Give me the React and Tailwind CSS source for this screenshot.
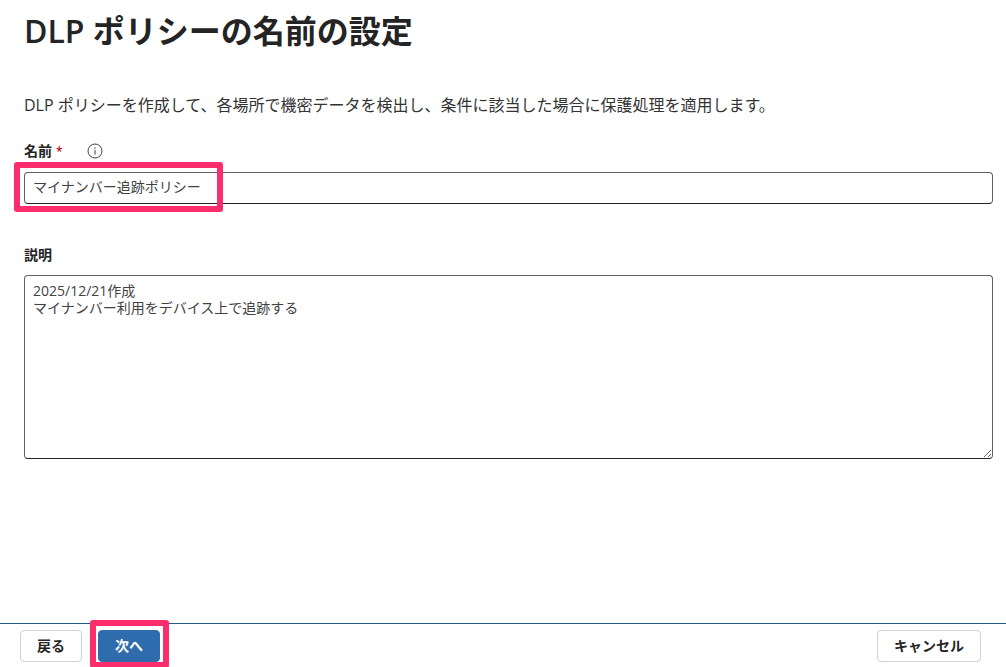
import { useState } from 'react';

function InfoIcon() {
  return (
    <svg viewBox="0 0 16 16" className="h-4 w-4" fill="none" stroke="#424242" aria-hidden="true">
      <circle cx="8" cy="8" r="7" strokeWidth="1" />
      <path d="M8 7.2v4" strokeWidth="1" strokeLinecap="round" />
      <circle cx="8" cy="5" r="0.7" fill="#424242" stroke="none" />
    </svg>
  );
}

const buttonBase = 'h-8 rounded border px-4 text-sm leading-5 font-semibold';

export default function App() {
  const [name, setName] = useState('マイナンバー追跡ポリシー');
  const [description, setDescription] = useState('2025/12/21作成\nマイナンバー利用をデバイス上で追跡する');

  return (
    <div className="flex min-h-screen flex-col overflow-hidden bg-white font-['Open_Sans','Noto_Sans_CJK_JP',sans-serif] text-[#242424]">
      <main className="flex-1 pt-[11px] pr-[13px] pl-6">
        <h1 className="text-[32px] leading-10 font-semibold">DLP ポリシーの名前の設定</h1>
        <p className="mt-[42px] text-base leading-6 text-[#333333]">
          DLP ポリシーを作成して、各場所で機密データを検出し、条件に該当した場合に保護処理を適用します。
        </p>

        {/* Name */}
        <div className="mt-6 flex h-5 items-center">
          <label htmlFor="policy-name" className="text-sm leading-5 font-semibold">
            名前<span className="ml-1 text-xs text-[#b10e1c]">*</span>
          </label>
          <button type="button" aria-label="情報" className="ml-6">
            <InfoIcon />
          </button>
        </div>
        <div className="relative mt-[11px]">
          <input
            id="policy-name"
            type="text"
            required
            value={name}
            onChange={e => setName(e.target.value)}
            className="block h-8 w-full rounded border border-[#616161] border-b-[#242424] px-2 pb-1 text-sm text-[#424242] outline-none"
          />
          <div className="pointer-events-none absolute -top-2.5 -left-2.5 h-[50px] w-[209px] rounded-[3px] border-[6px] border-[#fb2d6c]" />
        </div>

        {/* Description */}
        <label htmlFor="policy-description" className="mt-[39px] block text-sm leading-6 font-semibold">
          説明
        </label>
        <textarea
          id="policy-description"
          value={description}
          onChange={e => setDescription(e.target.value)}
          className="mt-2 block h-46 w-full resize rounded border border-[#616161] border-b-[#242424] px-2 py-1.5 text-sm leading-[17px] text-[#424242] outline-none"
        />
      </main>

      <footer className="flex h-11 items-start gap-4 border-t border-[#255a8c] pt-1.5 pr-[25px] pl-5">
        <button type="button" className={`${buttonBase} border-[#d1d1d1] bg-white`}>戻る</button>
        <div className="relative">
          <button type="button" className={`${buttonBase} border-[#2f6cad] bg-[#2f6cad] text-white`}>次へ</button>
          <div className="pointer-events-none absolute -top-2.5 -left-2 h-12 w-[79px] rounded-[3px] border-[6px] border-[#fb2d6c]" />
        </div>
        <button type="button" className={`${buttonBase} ml-auto border-[#d1d1d1] bg-white`}>キャンセル</button>
      </footer>
    </div>
  );
}
